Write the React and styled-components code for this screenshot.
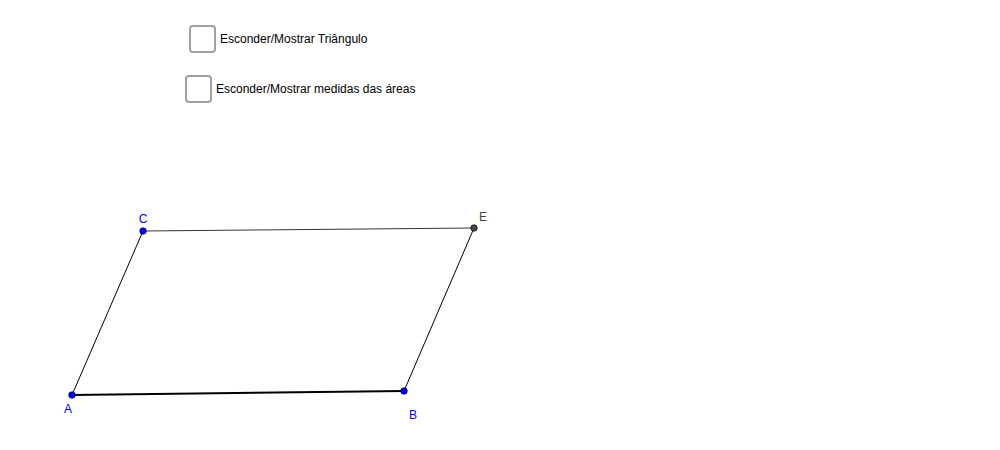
import React from "react";
import styled, { createGlobalStyle } from "styled-components";

const Global = createGlobalStyle`
  html, body { margin: 0; padding: 0; background: #fff; }
  body { font-family: "Liberation Sans", Arial, sans-serif; }
`;

const Applet = styled.div`
  position: relative;
  width: 1000px;
  height: 450px;
  background: #ffffff;
  overflow: hidden;
`;

const Canvas = styled.svg`
  position: absolute;
  inset: 0;
  display: block;
`;

const Toggle = styled.label`
  position: absolute;
  left: ${(p) => p.$x}px;
  top: ${(p) => p.$y}px;
  display: flex;
  align-items: center;
  gap: 4px;
  cursor: pointer;
`;

const Box = styled.span`
  width: 23px;
  height: 24px;
  border: 2px solid #a0a0a0;
  border-radius: 4px;
  background: #fff;
  box-sizing: content-box;
`;

const Caption = styled.span`
  font-family: "Liberation Sans", Arial, sans-serif;
  font-size: 12px;
  color: #000;
  white-space: nowrap;
`;

const points = [
  { id: "A", x: 72, y: 395, lx: 68, ly: 413, color: "#0000ff" },
  { id: "B", x: 404, y: 391, lx: 413, ly: 419, color: "#0000ff" },
  { id: "C", x: 143, y: 231, lx: 143, ly: 223, color: "#0000ff" },
  { id: "E", x: 474, y: 228, lx: 483, ly: 221, color: "#444444" },
];

export default function App() {
  return (
    <>
      <Global />
      <Applet>
        <Canvas width="1000" height="450" viewBox="0 0 1000 450">
          <line x1="72" y1="395" x2="404" y2="391" stroke="#000" strokeWidth="2" />
          <line x1="72" y1="395" x2="143" y2="231" stroke="#000" strokeWidth="1" />
          <line x1="143" y1="231" x2="474" y2="228" stroke="#333" strokeWidth="1" />
          <line x1="474" y1="228" x2="404" y2="391" stroke="#000" strokeWidth="1" />
          {points.map((p) => (
            <g key={p.id}>
              <circle cx={p.x} cy={p.y} r="3.3" fill={p.color} stroke="#000" strokeWidth="0.6" />
              <text
                x={p.lx}
                y={p.ly}
                fill={p.color}
                fontFamily="Liberation Sans, Arial, sans-serif"
                fontSize="12"
                textAnchor="middle"
              >
                {p.id}
              </text>
            </g>
          ))}
        </Canvas>
        <Toggle $x={189} $y={25}>
          <Box />
          <Caption>Esconder/Mostrar Triângulo</Caption>
        </Toggle>
        <Toggle $x={185} $y={75}>
          <Box />
          <Caption>Esconder/Mostrar medidas das áreas</Caption>
        </Toggle>
      </Applet>
    </>
  );
}
